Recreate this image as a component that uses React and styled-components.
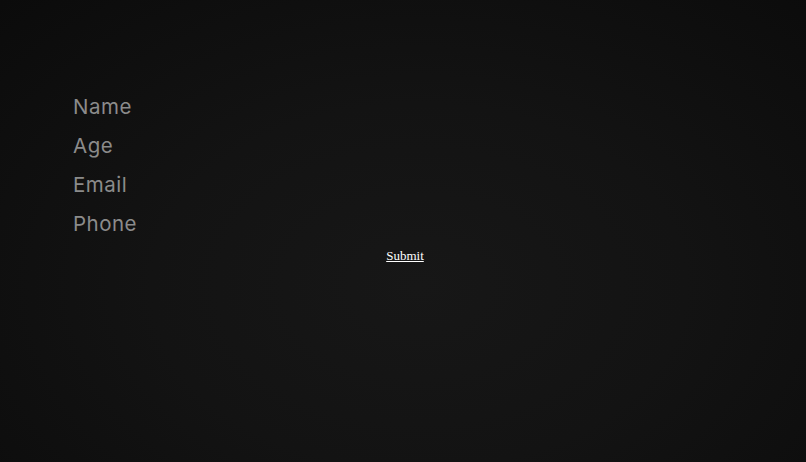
import React from 'react'
import styled, { createGlobalStyle } from 'styled-components'

const GlobalStyle = createGlobalStyle`
  html, body {
    margin: 0;
    height: 100%;
  }

  body {
    background: radial-gradient(ellipse at 52% 62%, #171717 0%, #131313 45%, #0b0b0b 100%);
    background-attachment: fixed;
  }
`

const Page = styled.main`
  min-height: 462px;
  padding-top: 87px;
  box-sizing: border-box;
`

const Form = styled.form`
  display: flex;
  flex-direction: column;
`

const Fields = styled.div`
  display: flex;
  flex-direction: column;
  padding-left: 73px;
`

const Label = styled.label`
  font-family: Inter, 'Open Sans', sans-serif;
  font-size: 20.5px;
  line-height: 39px;
  letter-spacing: 0.5px;
  color: #8b8b8b;
`

const SubmitButton = styled.button`
  align-self: center;
  margin-top: 5px;
  margin-left: 4px;
  padding: 0;
  border: none;
  background: none;
  font-family: 'Liberation Serif', serif;
  font-size: 13px;
  color: #ffffff;
  text-decoration: underline;
  cursor: pointer;
`

const fields = ['Name', 'Age', 'Email', 'Phone']

export default function App() {
  return (
    <>
      <GlobalStyle />
      <Page>
        <Form onSubmit={(e) => e.preventDefault()}>
          <Fields>
            {fields.map((name) => (
              <Label key={name}>{name}</Label>
            ))}
          </Fields>
          <SubmitButton type='submit'>Submit</SubmitButton>
        </Form>
      </Page>
    </>
  )
}
